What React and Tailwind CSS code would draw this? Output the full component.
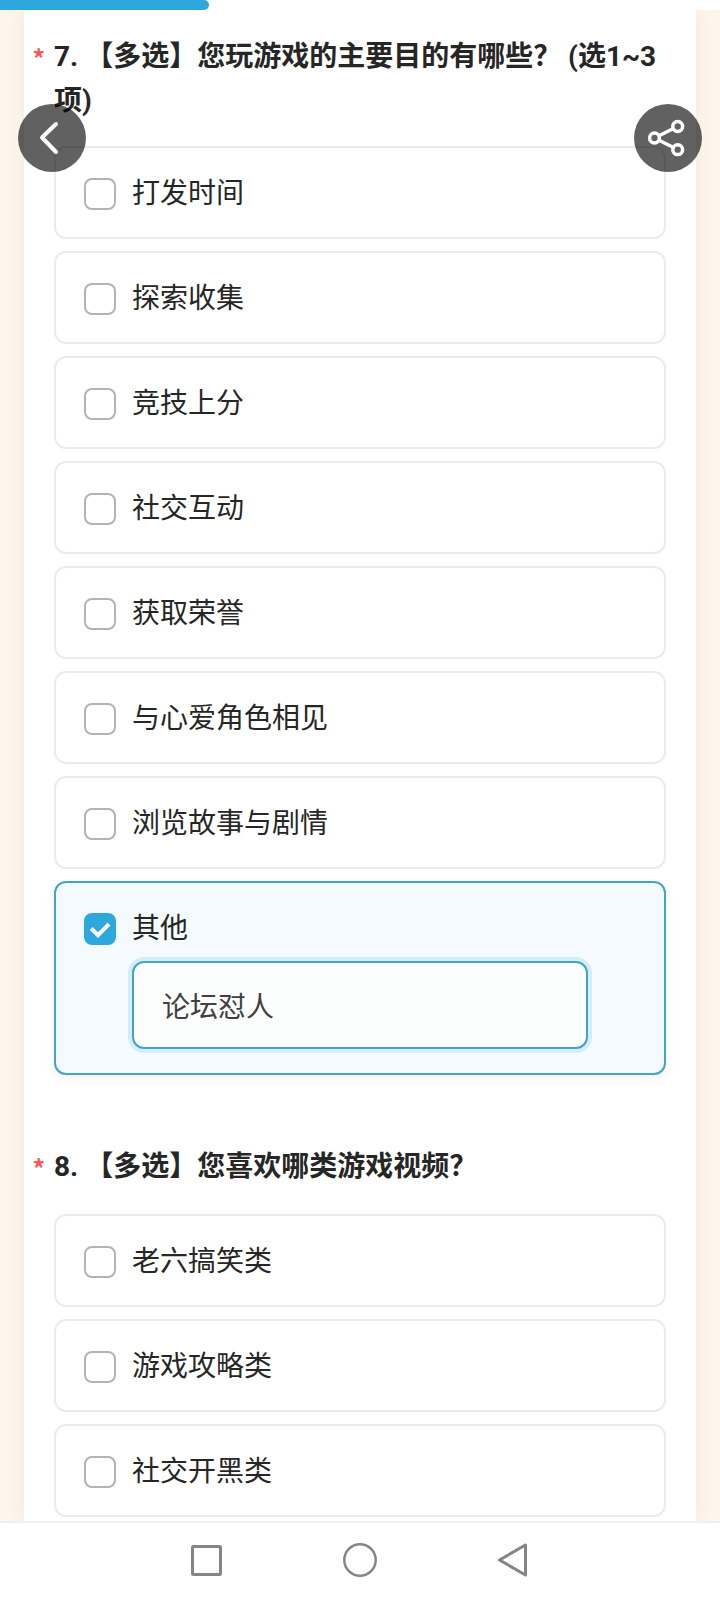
import React, { useState } from 'react';

const questions = [
  {
    id: 'q7',
    title: '7. 【多选】您玩游戏的主要目的有哪些？ (选1~3项)',
    options: ['打发时间', '探索收集', '竞技上分', '社交互动', '获取荣誉', '与心爱角色相见', '浏览故事与剧情', '其他'],
  },
  {
    id: 'q8',
    title: '8. 【多选】您喜欢哪类游戏视频？',
    options: ['老六搞笑类', '游戏攻略类', '社交开黑类'],
  },
];

function Option({ id, label, checked, onToggle, children }) {
  const cardBase = 'rounded-xl border-2 px-7 pt-[30px]';
  const cardState = checked
    ? 'border-[#40a5c8] bg-[#f4fafd] pb-6 shadow-[0_4px_12px_rgba(0,0,0,0.05)]'
    : 'border-[#ebebeb] bg-white pb-[27px]';

  return (
    <li className={`${cardBase} ${cardState}`}>
      <div className="flex items-center gap-4">
        <span className="relative flex h-8 w-8 shrink-0">
          <input
            id={id}
            type="checkbox"
            checked={checked}
            onChange={onToggle}
            className="h-8 w-8 appearance-none rounded-lg border-2 border-[#b3b3b3] bg-white checked:border-[#2ea8dc] checked:bg-[#2ea8dc]"
          />
          {checked ? (
            <svg viewBox="0 0 32 32" className="pointer-events-none absolute inset-0 h-8 w-8" fill="none" stroke="white" strokeWidth="4">
              <path d="M7.2 15.5 L14 22.2 L25 11.2" />
            </svg>
          ) : null}
        </span>
        <label htmlFor={id} className="flex-1 text-[28px] leading-8 text-[#262626]">
          {label}
        </label>
      </div>
      {children}
    </li>
  );
}

function Question({ question, answers, onToggle, note, onNote }) {
  return (
    <section className="pr-[30px] pl-2">
      <div className="flex text-[28px] leading-[44px]">
        <span className="w-[22px] shrink-0 font-['Noto_Sans_CJK_SC',sans-serif] leading-[46px] font-medium text-[#ff5354]">*</span>
        <h2 id={question.id} className="flex-1 font-bold text-[#262626]">
          {question.title}
        </h2>
      </div>
      <ul aria-labelledby={question.id} className="mt-[23px] ml-[22px] flex flex-col gap-3">
        {question.options.map((label) => {
          const checked = answers.includes(label);
          return (
            <Option key={label} id={`${question.id}-${label}`} label={label} checked={checked} onToggle={() => onToggle(label)}>
              {label === '其他' && checked ? (
                <div className="mt-4 px-12">
                  <input
                    type="text"
                    aria-label="其他"
                    value={note}
                    onChange={(e) => onNote(e.target.value)}
                    className="h-[88px] w-full rounded-xl border-2 border-[#40a5c8] bg-[#fcfefe] px-7 text-[28px] text-[#404040] ring-4 ring-[#d3eef8] outline-none"
                  />
                </div>
              ) : null}
            </Option>
          );
        })}
      </ul>
    </section>
  );
}

export default function App() {
  const [answers, setAnswers] = useState(['其他']);
  const [note, setNote] = useState('论坛怼人');

  const toggle = (label) => {
    setAnswers((prev) => (prev.includes(label) ? prev.filter((item) => item !== label) : [...prev, label]));
  };

  const roundButton = 'absolute top-[104px] flex h-[68px] w-[68px] items-center justify-center rounded-full bg-black/62 text-white';

  return (
    <div className="relative flex min-h-screen flex-col bg-white font-['Roboto','Noto_Sans_CJK_SC',sans-serif]">
      <div className="h-[10px] bg-white">
        <div className="h-full w-[29%] rounded-r-full bg-[#2ea8dc]" />
      </div>

      <main className="flex flex-1 flex-col overflow-hidden bg-[#fef5eb] px-6">
        <div className="flex flex-1 flex-col gap-[70px] bg-white pt-[25px] shadow-[0_0_16px_rgba(120,140,90,0.1)]">
          {questions.map((question) => (
            <Question key={question.id} question={question} answers={answers} onToggle={toggle} note={note} onNote={setNote} />
          ))}
        </div>
      </main>

      <button type="button" aria-label="返回" className={`${roundButton} left-[18px]`}>
        <svg viewBox="0 0 68 68" className="h-full w-full" fill="none" stroke="currentColor" strokeWidth="4" strokeLinecap="round">
          <path d="M38 20 L24 33.5 L38 48" strokeLinejoin="round" />
        </svg>
      </button>
      <button type="button" aria-label="分享" className={`${roundButton} right-[18px]`}>
        <svg viewBox="0 0 68 68" className="h-full w-full" fill="none" stroke="currentColor" strokeWidth="3.5">
          <circle cx="20.5" cy="34" r="4.9" />
          <circle cx="43.7" cy="22.5" r="4.9" />
          <circle cx="43.7" cy="45.7" r="4.9" />
          <path d="M25 31.7 L39 24.7 M25 36.3 L39 43.3" />
        </svg>
      </button>

      <nav className="flex h-[79px] items-center justify-center gap-[102px] border-t-2 border-[#f0f0f0] bg-white pb-1 text-[#858585]">
        <button type="button" aria-label="最近任务">
          <svg viewBox="0 0 52 52" className="h-[52px] w-[52px]" fill="none" stroke="currentColor" strokeWidth="3" strokeLinejoin="round">
            <rect x="12.5" y="12.5" width="28" height="28" rx="1" />
          </svg>
        </button>
        <button type="button" aria-label="主屏幕">
          <svg viewBox="0 0 52 52" className="h-[52px] w-[52px]" fill="none" stroke="currentColor" strokeWidth="2.5">
            <circle cx="26" cy="26" r="15.7" />
          </svg>
        </button>
        <button type="button" aria-label="返回">
          <svg viewBox="0 0 52 52" className="h-[52px] w-[52px]" fill="none" stroke="currentColor" strokeWidth="3" strokeLinejoin="round">
            <path d="M11.5 26 L37.5 11 V41 Z" />
          </svg>
        </button>
      </nav>
    </div>
  );
}
